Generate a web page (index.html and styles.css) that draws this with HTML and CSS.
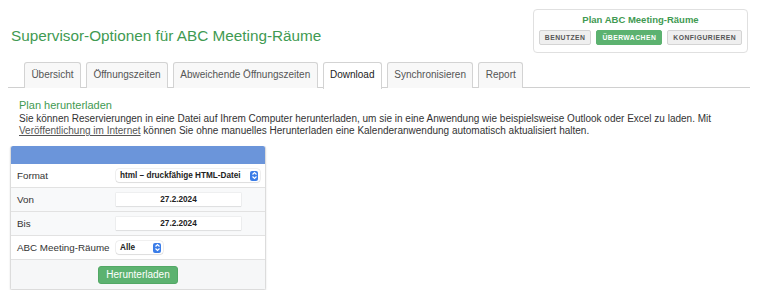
FILE: index.html
```html
<!DOCTYPE html>
<html lang="de">
<head>
<meta charset="utf-8">
<title>Supervisor-Optionen</title>
<link rel="stylesheet" href="styles.css">
</head>
<body>
<header class="top">
  <h1 class="title">Supervisor-Optionen für ABC Meeting-Räume</h1>
  <div class="plan">
    <div class="plan-name">Plan ABC Meeting-Räume</div>
    <div class="plan-btns">
      <span class="pbtn">Benutzen</span>
      <span class="pbtn pbtn-active">Überwachen</span>
      <span class="pbtn">Konfigurieren</span>
    </div>
  </div>
</header>
<nav class="tabs">
  <span class="tab">Übersicht</span>
  <span class="tab">Öffnungszeiten</span>
  <span class="tab">Abweichende Öffnungszeiten</span>
  <span class="tab tab-active">Download</span>
  <span class="tab">Synchronisieren</span>
  <span class="tab">Report</span>
</nav>
<section class="content">
  <h2 class="sub">Plan herunterladen</h2>
  <p class="desc">Sie können Reservierungen in eine Datei auf Ihrem Computer herunterladen, um sie in eine Anwendung wie beispielsweise Outlook oder Excel zu laden. Mit <a class="link" href="#">Veröffentlichung im Internet</a> können Sie ohne manuelles Herunterladen eine Kalenderanwendung automatisch aktualisiert halten.</p>
</section>
<div class="form">
  <div class="form-head"></div>
  <div class="row">
    <span class="label">Format</span>
    <span class="select select-wide">html – druckfähige HTML-Datei<span class="stepper"><svg width="7" height="9" viewBox="0 0 7 9"><path d="M1.5 3.5 L3.5 1.5 L5.5 3.5 M1.5 5.5 L3.5 7.5 L5.5 5.5" fill="none" stroke="#fff" stroke-width="1.2"/></svg></span></span>
  </div>
  <div class="row row-alt">
    <span class="label">Von</span>
    <span class="date">27.2.2024</span>
  </div>
  <div class="row row-alt">
    <span class="label">Bis</span>
    <span class="date">27.2.2024</span>
  </div>
  <div class="row">
    <span class="label">ABC Meeting-Räume</span>
    <span class="select select-small">Alle<span class="stepper"><svg width="7" height="9" viewBox="0 0 7 9"><path d="M1.5 3.5 L3.5 1.5 L5.5 3.5 M1.5 5.5 L3.5 7.5 L5.5 5.5" fill="none" stroke="#fff" stroke-width="1.2"/></svg></span></span>
  </div>
  <div class="row-foot">
    <span class="dl-btn">Herunterladen</span>
  </div>
</div>
</body>
</html>
```
FILE: styles.css
```css
* { box-sizing: border-box; }
body {
  margin: 0;
  font-family: "Liberation Sans", Arial, Helvetica, sans-serif;
  color: #333;
  background: #fff;
}
.top {
  display: flex;
  justify-content: space-between;
  align-items: flex-start;
  padding: 9px 12px 0 11px;
}
.title {
  margin: 0;
  padding-top: 17px;
  font-size: 15.3px;
  font-weight: normal;
  color: #3f9a52;
  line-height: 20px;
}
.plan {
  width: 215px;
  height: 44px;
  border: 1px solid #e0e0e0;
  border-radius: 4px;
  display: flex;
  flex-direction: column;
  align-items: center;
  padding-top: 4px;
}
.plan-name {
  font-size: 9.5px;
  font-weight: bold;
  color: #3f9a52;
  line-height: 12px;
}
.plan-btns {
  display: flex;
  gap: 5px;
  margin-top: 4px;
}
.pbtn {
  height: 15px;
  line-height: 13px;
  padding: 0 5px;
  font-size: 6.8px;
  font-weight: bold;
  letter-spacing: 0.45px;
  text-transform: uppercase;
  color: #555;
  background: #efefef;
  border: 1px solid #d4d4d4;
  border-radius: 2px;
}
.pbtn-active {
  background: #5cb270;
  border-color: #5cb270;
  color: #fff;
}
.tabs {
  display: flex;
  gap: 5px;
  margin: 9px 10px 0 8px;
  padding-left: 16px;
  border-bottom: 1px solid #d0d0d0;
  height: 26px;
}
.tab {
  height: 26px;
  line-height: 24px;
  padding: 0 6.4px;
  font-size: 10px;
  color: #555;
  background: #f8f8f8;
  border: 1px solid #d3d3d3;
  border-bottom: none;
  border-radius: 3px 3px 0 0;
}
.tab-active {
  background: #fff;
  color: #222;
  height: 27px;
}
.content {
  padding: 10px 19px 0 19px;
}
.sub {
  margin: 0;
  font-size: 11px;
  font-weight: normal;
  color: #3f9a52;
  line-height: 14px;
}
.desc {
  margin: 0;
  margin-top: 1px;
  font-size: 10px;
  line-height: 12px;
  color: #333;
}
.link {
  color: #555;
  text-decoration: underline;
}
.form {
  margin: 9px 0 0 10px;
  width: 256px;
  border: 1px solid #dcdcdc;
  border-top: none;
  border-radius: 2px;
  box-shadow: 0 1px 2px rgba(0,0,0,0.12);
}
.form-head {
  height: 18px;
  background: #6b95da;
  border-radius: 2px 2px 0 0;
}
.row {
  display: flex;
  align-items: center;
  height: 24px;
  border-bottom: 1px solid #e2e2e2;
  background: #fff;
}
.row-alt { background: #f8f9fa; }
.label {
  width: 105px;
  padding-left: 6px;
  font-size: 9.8px;
  color: #333;
  white-space: nowrap;
}
.select {
  display: flex;
  align-items: center;
  justify-content: space-between;
  height: 13px;
  padding: 0 2px 0 4px;
  font-size: 8.2px;
  font-weight: bold;
  color: #222;
  background: #fff;
  border-radius: 3px;
  box-shadow: 0 0 0 0.5px rgba(0,0,0,0.12), 0 1px 1px rgba(0,0,0,0.08);
}
.select-wide { width: 144px; }
.select-small { width: 47px; }
.stepper {
  display: flex;
  align-items: center;
  justify-content: center;
  width: 8px;
  height: 10px;
  background: #3b7de8;
  border-radius: 2px;
}
.date {
  width: 125px;
  height: 13px;
  line-height: 13px;
  text-align: center;
  font-size: 8.2px;
  font-weight: bold;
  color: #222;
  background: #fff;
  box-shadow: 0 0 0 0.5px rgba(0,0,0,0.08), 0 1px 1px rgba(0,0,0,0.06);
}
.row-foot {
  display: flex;
  justify-content: center;
  align-items: center;
  height: 29px;
  background: #f6f7f8;
}
.dl-btn {
  height: 18px;
  line-height: 16px;
  padding: 0 7px;
  font-size: 10px;
  color: #fff;
  background: #5cb270;
  border: 1px solid #52a865;
  border-radius: 3px;
}
```
